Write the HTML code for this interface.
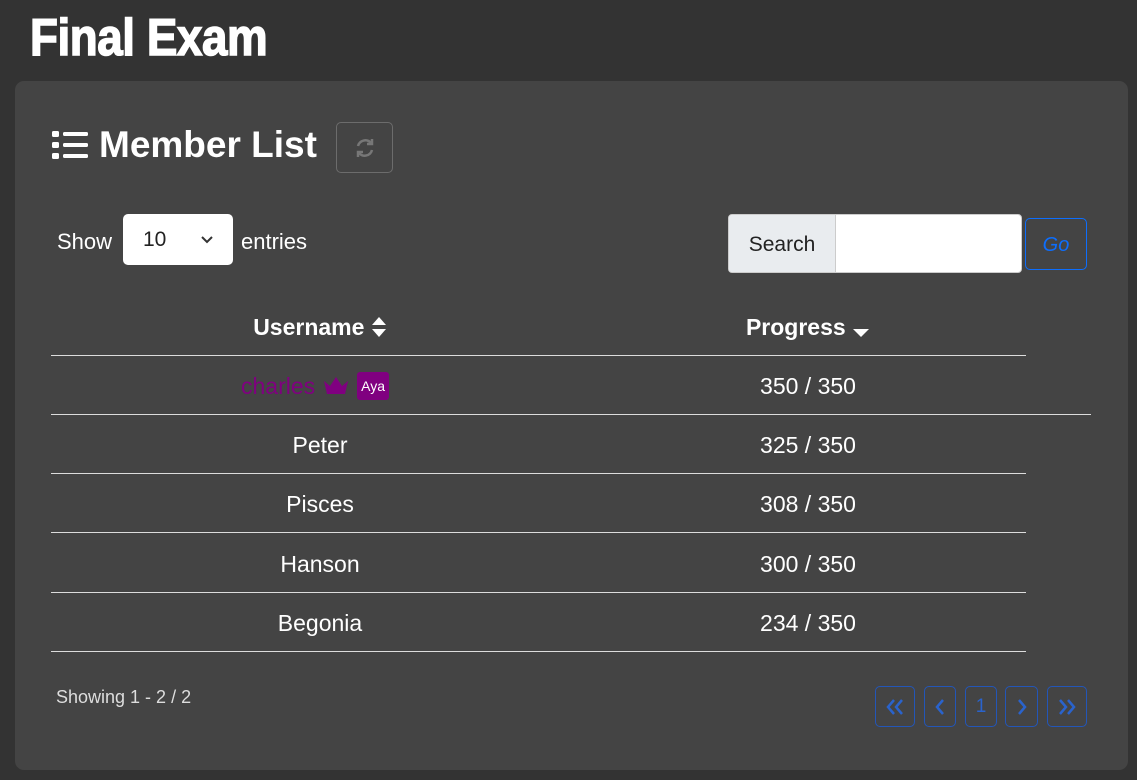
<!DOCTYPE html>
<html><head><style>
*{box-sizing:border-box;margin:0;padding:0}
body{width:1137px;height:780px;background:#333;font-family:"Liberation Sans",sans-serif;color:#fff;position:relative;overflow:hidden}
.abs{position:absolute}
.title{left:30px;top:8px;font-size:52px;font-weight:bold;transform:scaleX(0.88);transform-origin:left;letter-spacing:-0.5px;-webkit-text-stroke:1.5px #fff}
.card{left:15px;top:81px;width:1113px;height:689px;background:#444;border-radius:9px}
.h{left:52px;top:124px;font-size:37px;font-weight:bold;display:flex;align-items:center;gap:11px}
.refresh{left:336px;top:122px;width:57px;height:51px;border:1px solid #6c6c6c;border-radius:5px;display:flex;align-items:center;justify-content:center}
.sel{left:123px;top:214px;width:110px;height:51px;background:#fff;border-radius:5px;color:#222;font-size:21px;padding:14px 0 0 20px}
.txt{font-size:22px}
.search{left:728px;top:214px;width:294px;height:59px;background:#fff;border:1px solid #ccc;border-radius:4px;overflow:hidden}
.search div{width:107px;height:100%;background:#e9ecef;border-right:1px solid #ccc;color:#222;font-size:21px;padding-top:18px;text-align:center}
.go{left:1025px;top:218px;width:62px;height:52px;border:1px solid #0d6efd;border-radius:5px;color:#0d6efd;font-size:20px;text-align:center;padding-top:15px;font-style:italic}
.line{height:1px;background:#ddd;left:51px;width:975px}
.cell{font-size:23px;width:300px;text-align:center}
.pg{top:686px;height:41px;border:1px solid #2356b8;border-radius:5px;display:flex;align-items:center;justify-content:center;color:#2a63cc;font-size:19px}
</style></head><body>
<div class="abs title">Final Exam</div>
<div class="abs card"></div>
<div class="abs h"><svg width="36" height="30" viewBox="0 0 36 30"><g fill="#fff"><rect x="0" y="1" width="7" height="6" rx="1.5"/><rect x="0" y="12" width="7" height="6" rx="1.5"/><rect x="0" y="23" width="7" height="6" rx="1.5"/><rect x="11" y="2" width="25" height="4" rx="1.5"/><rect x="11" y="13" width="25" height="4" rx="1.5"/><rect x="11" y="24" width="25" height="4" rx="1.5"/></g></svg><span>Member List</span></div>
<div class="abs refresh"><svg width="22" height="22" viewBox="0 0 22 22" fill="none" stroke="#777" stroke-width="2.5"><path d="M4 9a7.5 7.5 0 0 1 13-3"/><path d="M18 2v5h-5"/><path d="M18 13a7.5 7.5 0 0 1-13 3"/><path d="M4 20v-5h5"/></svg></div>
<div class="abs txt" style="left:57px;top:229px">Show</div>
<div class="abs sel">10<svg style="position:absolute;left:78px;top:22px" width="12" height="8" viewBox="0 0 12 8"><path d="M1 1l5 5 5-5" stroke="#333" stroke-width="2" fill="none"/></svg></div>
<div class="abs txt" style="left:241px;top:229px">entries</div>
<div class="abs search"><div>Search</div></div>
<div class="abs go">Go</div>
<div class="abs cell" style="left:170px;top:314px;font-weight:bold">Username <svg width="16" height="22" viewBox="0 0 16 22" style="vertical-align:-3px"><path d="M8 1l7 8H1z M8 21l7-8H1z" fill="#fff"/></svg></div>
<div class="abs cell" style="left:658px;top:314px;font-weight:bold">Progress <svg width="18" height="10" viewBox="0 0 18 10" style="vertical-align:-3px"><path d="M1 1h16l-8 8z" fill="#fff"/></svg></div>
<div class="abs line" style="top:355px"></div>
<div class="abs line" style="top:414px;width:1040px"></div>
<div class="abs line" style="top:473px"></div>
<div class="abs line" style="top:532px"></div>
<div class="abs line" style="top:592px"></div>
<div class="abs line" style="top:651px"></div>
<div class="abs" style="left:241px;top:372px;font-size:23px;color:#800080;display:flex;align-items:center;gap:7px">charles <svg width="28" height="22" viewBox="0 0 28 22"><path d="M2 6l6 5 6-9 6 9 6-5-3 13H5z" fill="#800080"/></svg><span style="background:#800080;color:#fff;font-size:14px;padding:6px 4px;border-radius:3px">Aya</span></div>
<div class="abs cell" style="left:658px;top:373px">350 / 350</div>
<div class="abs cell" style="left:170px;top:432px">Peter</div>
<div class="abs cell" style="left:658px;top:432px">325 / 350</div>
<div class="abs cell" style="left:170px;top:491px">Pisces</div>
<div class="abs cell" style="left:658px;top:491px">308 / 350</div>
<div class="abs cell" style="left:170px;top:551px">Hanson</div>
<div class="abs cell" style="left:658px;top:551px">300 / 350</div>
<div class="abs cell" style="left:170px;top:610px">Begonia</div>
<div class="abs cell" style="left:658px;top:610px">234 / 350</div>
<div class="abs" style="left:56px;top:687px;font-size:18px;color:#ddd">Showing 1 - 2 / 2</div>
<div class="abs pg" style="left:875px;width:40px"><svg width="18" height="16" viewBox="0 0 18 16" fill="none" stroke="#2a63cc" stroke-width="2.5"><path d="M8 1L2 8l6 7M16 1l-6 7 6 7"/></svg></div>
<div class="abs pg" style="left:924px;width:32px"><svg width="10" height="16" viewBox="0 0 10 16" fill="none" stroke="#2a63cc" stroke-width="2.5"><path d="M8 1L2 8l6 7"/></svg></div>
<div class="abs pg" style="left:965px;width:32px">1</div>
<div class="abs pg" style="left:1005px;width:33px"><svg width="10" height="16" viewBox="0 0 10 16" fill="none" stroke="#2a63cc" stroke-width="2.5"><path d="M2 1l6 7-6 7"/></svg></div>
<div class="abs pg" style="left:1047px;width:40px"><svg width="18" height="16" viewBox="0 0 18 16" fill="none" stroke="#2a63cc" stroke-width="2.5"><path d="M2 1l6 7-6 7M10 1l6 7-6 7"/></svg></div>
</body></html>
